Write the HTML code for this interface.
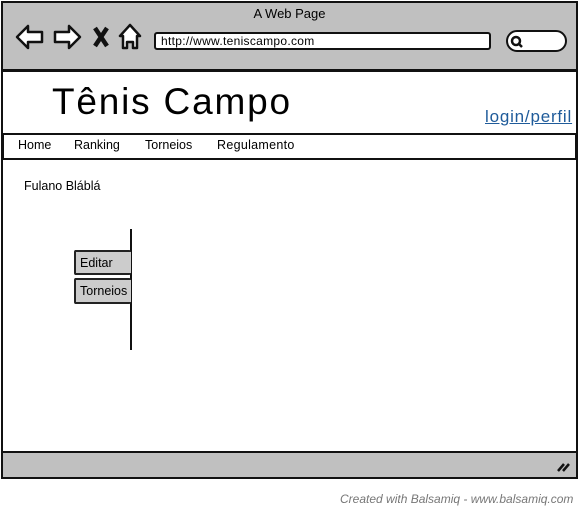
<!DOCTYPE html>
<html><head><meta charset="utf-8"><style>
*{margin:0;padding:0;box-sizing:border-box}
body{width:579px;height:510px;background:#fff;position:relative;font-family:"Liberation Sans",sans-serif;overflow:hidden}
.a{position:absolute}
.t{font-family:"Liberation Sans",sans-serif;color:#000}
</style></head><body>
<div class="a" style="left:1px;top:1px;width:577px;height:478px;border:2px solid #111;background:#fff"></div>
<div class="a" style="left:3px;top:3px;width:573px;height:69px;background:#c0c0c0;border-bottom:3px solid #111"></div>
<div class="a t" style="left:0;width:579px;top:6px;text-align:center;font-size:13px">A Web Page</div>
<svg class="a" style="left:14px;top:22px" width="130" height="30" viewBox="0 0 130 30">
<g fill="#fff" stroke="#111" stroke-width="2.5" stroke-linejoin="round">
<path d="M3 15 L14 4 L14 10 L28 10 L28 20 L14 20 L14 26 Z"/>
<path d="M66 15 L55 4 L55 10 L41 10 L41 20 L55 20 L55 26 Z"/>
<path d="M116 3 L106 14 L109 14 L109 26 L113 26 L113 20 L119 20 L119 26 L123 26 L123 14 L126 14 Z"/>
</g>
<path d="M81 6 L93 24 M93 6 L81 24" stroke="#111" stroke-width="4.5"/>
</svg>
<div class="a t" style="left:154px;top:32px;width:337px;height:18px;background:#fff;border:2px solid #111;border-radius:3px;font-size:12px;line-height:14px;padding-left:5px;letter-spacing:0.3px">http://www.teniscampo.com</div>
<div class="a" style="left:506px;top:30px;width:61px;height:22px;background:#fff;border:2px solid #111;border-radius:11px"></div>
<svg class="a" style="left:510px;top:35px" width="14" height="14"><circle cx="6" cy="6" r="4" fill="none" stroke="#111" stroke-width="2.5"/><path d="M8 8 L12 12" stroke="#111" stroke-width="2.5"/></svg>
<div class="a t" style="left:52px;top:80px;font-size:37px;line-height:44px;letter-spacing:1.8px">Tênis Campo</div>
<div class="a" style="left:485px;top:107px;font-size:17px;color:#1f5b9a;text-decoration:underline;letter-spacing:0.8px">login/perfil</div>
<div class="a" style="left:2px;top:133px;width:575px;height:27px;border:2px solid #111;background:#fff"></div>
<div class="a t" style="left:18px;top:138px;font-size:12.5px">Home</div>
<div class="a t" style="left:74px;top:138px;font-size:12.5px">Ranking</div>
<div class="a t" style="left:145px;top:138px;font-size:12.5px">Torneios</div>
<div class="a t" style="left:217px;top:138px;font-size:12.5px;letter-spacing:0.3px">Regulamento</div>
<div class="a t" style="left:24px;top:179px;font-size:12.5px">Fulano Bláblá</div>
<div class="a" style="left:130px;top:229px;width:2px;height:121px;background:#111"></div>
<div class="a t" style="left:74px;top:250px;width:57px;height:25px;background:#ccc;border:2px solid #222;border-right:none;border-radius:2px;font-size:12.5px;padding:4px 0 0 4px">Editar</div>
<div class="a t" style="left:74px;top:278px;width:57px;height:26px;background:#ccc;border:2px solid #222;border-right:none;border-radius:2px;font-size:12.5px;padding:4px 0 0 4px">Torneios</div>
<div class="a" style="left:3px;top:451px;width:573px;height:26px;background:#c0c0c0;border-top:2px solid #111"></div>
<svg class="a" style="left:556px;top:459px" width="16" height="14"><path d="M2 12 L8 5 M7 12 L13 5" stroke="#111" stroke-width="2.5"/></svg>
<div class="a" style="left:340px;top:492px;font-size:12px;font-style:italic;color:#777">Created with Balsamiq - www.balsamiq.com</div>
</body></html>
